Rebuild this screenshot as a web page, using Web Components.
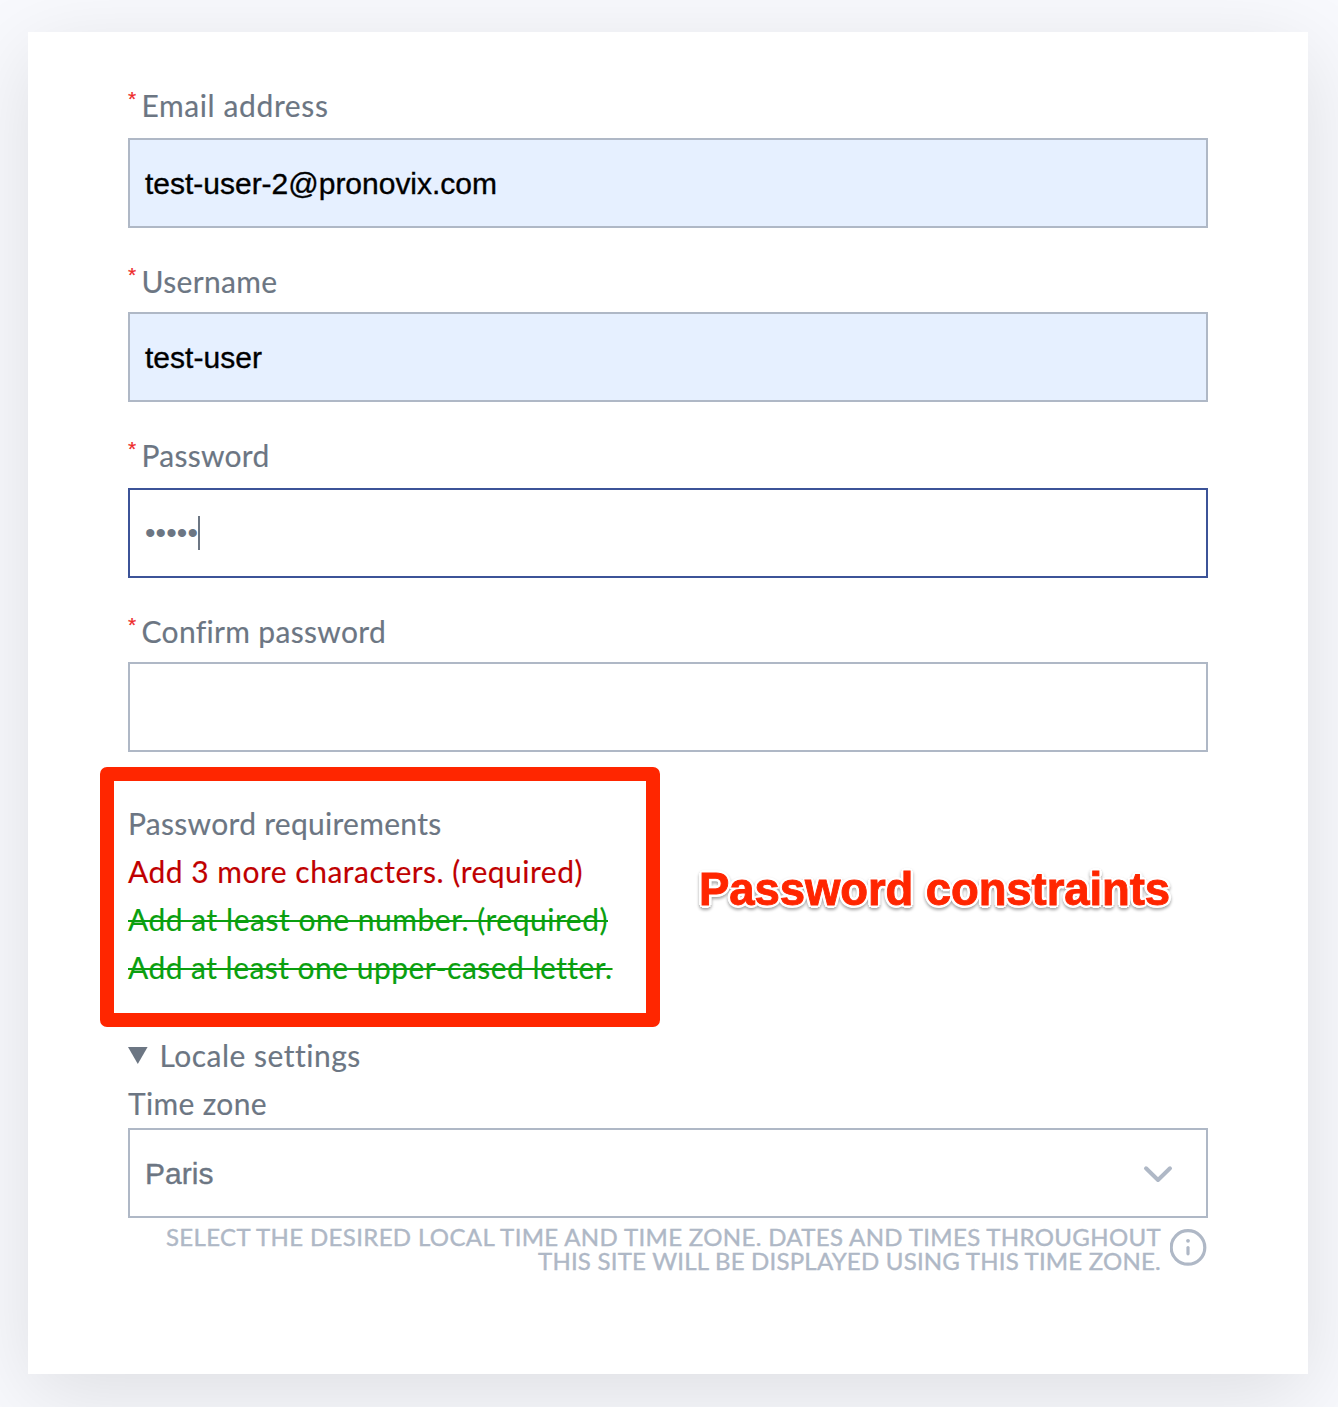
<!DOCTYPE html>
<html lang="en">
<head>
<meta charset="utf-8">
<title>Create account</title>
<style>
html, body { margin: 0; height: 100%; }
body { background: #f8f9fd; font: 30px/48px Lato, "Open Sans", sans-serif; color: #6c7683; overflow: hidden; }
</style>
</head>
<body>
<register-page></register-page>
<script>
const define = (name, html, connected) => {
  const t = document.createElement('template');
  t.innerHTML = html;
  customElements.define(name, class extends HTMLElement {
    constructor() {
      super();
      this.attachShadow({ mode: 'open' }).append(t.content.cloneNode(true));
    }
    connectedCallback() { if (connected) connected.call(this, this.shadowRoot); }
  });
};

/* One line of text, tracked so that it fills the width in its "w" attribute. */
define('fit-text', `
<style>:host { display: inline-block; white-space: nowrap; }</style><slot></slot>`,
function () {
  const n = this.textContent.length;
  this.style.letterSpacing = '0';
  const natural = this.getBoundingClientRect().width;
  this.style.letterSpacing = ((+this.getAttribute('w') - natural) / n).toFixed(4) + 'px';
});

define('field-box', `
<style>
:host { display: flex; align-items: center; box-sizing: border-box; height: 90px; padding: 0 33px 0 15px;
  border: 2px solid #afb8c6; background: #fff; font: 30px/34px "Liberation Sans", Arial, sans-serif; }
:host([filled]) { background: #e6f0ff; color: #000; }
:host([focused]) { border-color: #3c5398; }
::slotted(fit-text) { padding-top: 2px; -webkit-text-stroke: .35px currentColor; }
:host([focused]) ::slotted(fit-text) { -webkit-text-stroke: 0; padding-top: 0; }
.caret { display: none; width: 2px; height: 34px; background: #6c7683; }
:host([focused]) .caret { display: block; }
</style><slot></slot><span class="caret"></span>`);

define('form-field', `
<style>
:host { display: flex; flex-direction: column; gap: 8px; }
:host([wide]) { gap: 10px; }
.label { display: flex; height: 48px; }
.star { width: 13.5px; color: #ee2a2a; font: 21px/38px "Liberation Sans", Arial, sans-serif; -webkit-text-stroke: .2px #ee2a2a; }
::slotted([slot=label]) { padding-top: 1px; -webkit-text-stroke: .15px currentColor; }
</style>
<div class="label"><span class="star">*</span><slot name="label"></slot></div>
<slot></slot>`);

define('password-requirements', `
<style>
:host { display: flex; flex-direction: column; align-items: flex-start; position: relative; -webkit-text-stroke: .15px; }
.todo { color: #c00000; }
.done { color: #0a9f0f; text-decoration: line-through 2px; }
.frame { position: absolute; left: -28px; top: -32px; width: 532px; height: 232px;
  border: 14px solid #ff2600; border-radius: 7px; }
.note { position: absolute; left: 571px; top: 66px; font: bold 45.5px/50px "Liberation Sans", Arial, sans-serif;
  color: #ff2600; -webkit-text-stroke: .9px #ff2600;
  text-shadow: 3px 0 #fff, -3px 0 #fff, 0 3px #fff, 0 -3px #fff, 2.1px 2.1px #fff, -2.1px 2.1px #fff, 2.1px -2.1px #fff, -2.1px -2.1px #fff;
  filter: drop-shadow(0 2px 1.5px rgba(0,0,0,.35)); }
</style>
<fit-text w="313.5">Password requirements</fit-text>
<fit-text class="todo" w="455">Add 3 more characters. (required)</fit-text>
<fit-text class="done" w="480">Add at least one number. (required)</fit-text>
<fit-text class="done" w="483.5">Add at least one upper-cased letter.</fit-text>
<div class="frame"></div>
<fit-text class="note" w="471">Password constraints</fit-text>`);

define('locale-settings', `
<style>
:host { display: flex; flex-direction: column; }
.summary { display: flex; align-items: center; gap: 11.5px; height: 48px; }
.label { height: 49px; }
.summary, .label { -webkit-text-stroke: .15px; }
svg { display: block; }
.chevron { margin: 1px 0 0 auto; }
.help { display: flex; justify-content: flex-end; gap: 9px; padding-top: 7px; color: #afb8c6; }
.lines { display: flex; flex-direction: column; align-items: flex-end; font-size: 24px; line-height: 24px; -webkit-text-stroke: .4px #afb8c6; }
.info { margin-top: 3px; }
</style>
<div class="summary">
  <svg width="20" height="20" viewBox="0 0 20 20"><path d="M0 2H19.6L9.8 19Z" fill="#6c7683"/></svg>
  <fit-text w="200.5">Locale settings</fit-text>
</div>
<div class="label"><fit-text w="139">Time zone</fit-text></div>
<field-box><fit-text w="68.5">Paris</fit-text>
  <svg class="chevron" width="30" height="18" viewBox="0 0 30 18"><path d="M3 3.3 15 15 27 3.3" fill="none" stroke="#afb8c6" stroke-width="4" stroke-linecap="round" stroke-linejoin="round"/></svg>
</field-box>
<div class="help">
  <div class="lines">
    <fit-text w="995">SELECT THE DESIRED LOCAL TIME AND TIME ZONE. DATES AND TIMES THROUGHOUT</fit-text>
    <fit-text w="623">THIS SITE WILL BE DISPLAYED USING THIS TIME ZONE.</fit-text>
  </div>
  <svg class="info" width="38" height="38" viewBox="0 0 38 38"><g fill="none" stroke="#afb8c6" stroke-width="3.2" stroke-linecap="round"><circle cx="18" cy="19.4" r="16.8"/><path d="M18 19.5v6.3"/></g><circle cx="18" cy="12.8" r="1.9" fill="#afb8c6"/></svg>
</div>`);

define('register-page', `
<style>
:host { display: flex; padding: 32px 30px 33px 28px; }
main { flex: 1; box-sizing: border-box; height: 1342px; padding: 48px 100px; display: flex; flex-direction: column;
  background: #fff; box-shadow: 0 20px 80px rgba(0,0,0,.11); }
form-field { margin-bottom: 28px; }
password-requirements { margin: 19px 0 40px; }
</style>
<main>
  <form-field wide><fit-text slot="label" w="187">Email address</fit-text>
    <field-box filled><fit-text w="352">test-user-2@pronovix.com</fit-text></field-box></form-field>
  <form-field><fit-text slot="label" w="136">Username</fit-text>
    <field-box filled><fit-text w="117">test-user</fit-text></field-box></form-field>
  <form-field wide><fit-text slot="label" w="128">Password</fit-text>
    <field-box focused><fit-text w="53">•••••</fit-text></field-box></form-field>
  <form-field><fit-text slot="label" w="244">Confirm password</fit-text>
    <field-box></field-box></form-field>
  <password-requirements></password-requirements>
  <locale-settings></locale-settings>
</main>`);
</script>
</body>
</html>
